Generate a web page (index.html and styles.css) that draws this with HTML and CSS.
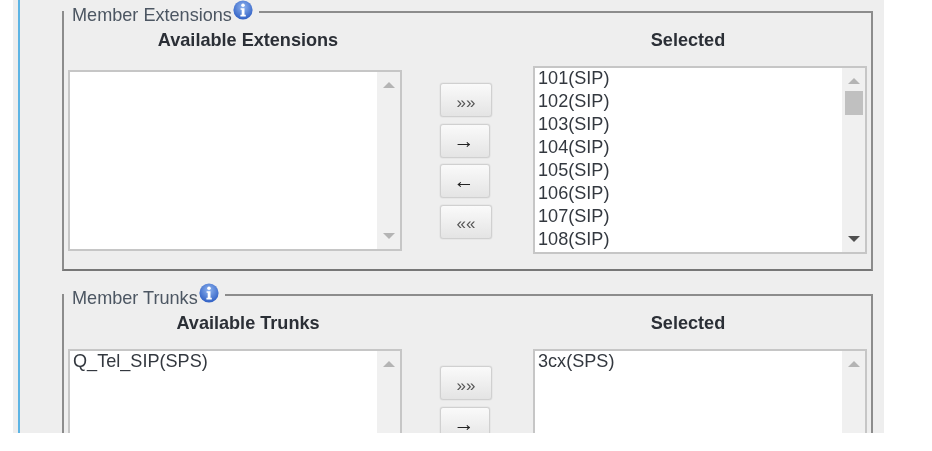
FILE: index.html
```html
<!DOCTYPE html>
<html lang="en">
<head>
  <meta charset="UTF-8">
  <meta name="viewport" content="width=device-width, initial-scale=1.0">
  <title>Member Extensions</title>
  <link rel="stylesheet" href="styles.css">
</head>
<body>

  <div class="page">
    <div class="content">

      <!-- Member Extensions -->
      <fieldset class="group">
        <legend class="group-title">
          <span class="group-name">Member Extensions</span>
          <svg class="info-icon" viewBox="0 0 20 20"><use href="#info"></use></svg>
        </legend>
        <div class="picker">
          <div class="col-title col-title-left">Available Extensions</div>
          <div></div>
          <div class="col-title col-title-right">Selected</div>

          <div class="listbox listbox-short">
            <div class="list-items"></div>
            <div class="scrollbar">
              <span class="arrow-up"></span>
              <span class="arrow-down"></span>
            </div>
          </div>
          <div class="move-buttons">
            <button class="move-btn wide">»»</button>
            <button class="move-btn arrow">→</button>
            <button class="move-btn arrow">←</button>
            <button class="move-btn wide">««</button>
          </div>
          <div class="listbox">
            <div class="list-items">
              <div>101(SIP)</div>
              <div>102(SIP)</div>
              <div>103(SIP)</div>
              <div>104(SIP)</div>
              <div>105(SIP)</div>
              <div>106(SIP)</div>
              <div>107(SIP)</div>
              <div>108(SIP)</div>
            </div>
            <div class="scrollbar">
              <span class="arrow-up"></span>
              <span class="thumb"></span>
              <span class="arrow-down dark"></span>
            </div>
          </div>
        </div>
      </fieldset>

      <!-- Member Trunks -->
      <fieldset class="group">
        <legend class="group-title">
          <span class="group-name">Member Trunks</span>
          <svg class="info-icon" viewBox="0 0 20 20"><use href="#info"></use></svg>
        </legend>
        <div class="picker">
          <div class="col-title col-title-left">Available Trunks</div>
          <div></div>
          <div class="col-title col-title-right">Selected</div>

          <div class="listbox">
            <div class="list-items">
              <div>Q_Tel_SIP(SPS)</div>
            </div>
            <div class="scrollbar">
              <span class="arrow-up"></span>
              <span class="arrow-down"></span>
            </div>
          </div>
          <div class="move-buttons">
            <button class="move-btn wide">»»</button>
            <button class="move-btn arrow">→</button>
          </div>
          <div class="listbox">
            <div class="list-items">
              <div>3cx(SPS)</div>
            </div>
            <div class="scrollbar">
              <span class="arrow-up"></span>
              <span class="arrow-down"></span>
            </div>
          </div>
        </div>
      </fieldset>

    </div>
  </div>

  <!-- Shared info icon -->
  <svg class="icon-defs" aria-hidden="true">
    <defs>
      <radialGradient id="info-fill" cx="50%" cy="35%" r="65%">
        <stop offset="0%" stop-color="#8fb4ef"/>
        <stop offset="100%" stop-color="#2f5fc4"/>
      </radialGradient>
      <g id="info">
        <circle cx="10" cy="10" r="9.6" fill="url(#info-fill)"/>
        <circle cx="10" cy="5.2" r="1.8" fill="#fff"/>
        <path d="M7.6 8.2h3.9v6.6h1.3v1.6H7.4v-1.6h1.3v-5H7.6z" fill="#fff"/>
      </g>
    </defs>
  </svg>

</body>
</html>
```

FILE: styles.css
```css
/* Basic Styling */
body {
  margin: 0;
  background-color: #fff;
  font-family: "Liberation Sans", Arial, sans-serif;
  overflow: hidden;
}

.icon-defs {
  width: 0;
  height: 0;
  display: block;
}

/* Page panel, cut off at the bottom */
.page {
  width: 866px;
  height: 433px;
  margin-left: 13px;
  padding-left: 5px;
  background-color: #eee;
  overflow: hidden;
  filter: blur(0.4px);
}

.content {
  height: 100%;
  border-left: 2px solid #5db4e4;
  padding-left: 42px;
}

/* Fieldsets */
.group {
  width: 811px;
  box-sizing: border-box;
  margin: 0 0 11px;
  padding: 0 4px 15px;
  border: 2px solid #8c8c8c;
  border-bottom-color: #777;
}

.group-title {
  display: flex;
  align-items: flex-start;
  height: 24px;
  margin-left: -4px;
  padding: 0 6px 0 8px;
}

/* second group sits a pixel lower under its line */
.group + .group .group-title {
  height: 25px;
  padding-top: 1px;
  box-sizing: border-box;
}

.group-name {
  margin-top: 4px;
  font-size: 18.1px;
  line-height: 22px;
  color: #4c5662;
}

.info-icon {
  width: 20px;
  height: 20px;
  margin-left: 1px;
}

/* Two lists with the buttons between them */
.picker {
  display: grid;
  grid-template-columns: 334px 55px 334px;
  column-gap: 38px;
  align-items: start;
}

.col-title {
  margin-top: 5px;
  margin-bottom: 15px;
  font-size: 18.1px;
  font-weight: bold;
  line-height: 22px;
  text-align: center;
  color: #2b2f36;
}

.col-title-left {
  padding-left: 26px;
}

.col-title-right {
  padding-right: 24px;
}

.listbox {
  display: flex;
  height: 188px;
  box-sizing: border-box;
  border: 2px solid #c6c6c6;
  background-color: #fff;
}

.listbox-short {
  height: 181px;
  margin-top: 4px;
}

.list-items {
  flex: 1;
  margin-top: -1px;
  padding-left: 3px;
  font-size: 18.1px;
  line-height: 23px;
  color: #33383f;
}

.scrollbar {
  display: flex;
  flex-direction: column;
  align-items: center;
  width: 23px;
  padding: 10px 0;
  box-sizing: border-box;
  background-color: #f0f0f0;
}

.arrow-up,
.arrow-down {
  width: 0;
  height: 0;
  border-left: 6px solid transparent;
  border-right: 6px solid transparent;
}

.arrow-up {
  border-bottom: 6px solid #b4b4b4;
}

.arrow-down {
  margin-top: auto;
  border-top: 6px solid #b4b4b4;
}

.arrow-down.dark {
  border-top-color: #505050;
}

.thumb {
  width: 18px;
  height: 24px;
  margin-top: 7px;
  background-color: #c0c0c0;
}

/* Move buttons */
.move-buttons {
  display: flex;
  flex-direction: column;
  align-items: flex-start;
  gap: 6.5px;
  margin-top: 17px;
}

.move-btn {
  width: 50px;
  height: 34px;
  padding: 5px 0 0;
  border: 1px solid #d0d0d0;
  border-radius: 3px;
  background: linear-gradient(#fafafa, #e4e4e4);
  box-shadow: 0 0 1px #aaa;
  font-family: "Liberation Sans", Arial, sans-serif;
  font-size: 17px;
  color: #555;
}

.move-btn.wide {
  width: 52px;
}

.move-btn.arrow {
  padding: 0 2px 0 0;
  font-size: 21px;
  line-height: 20px;
  color: #222;
}
```
